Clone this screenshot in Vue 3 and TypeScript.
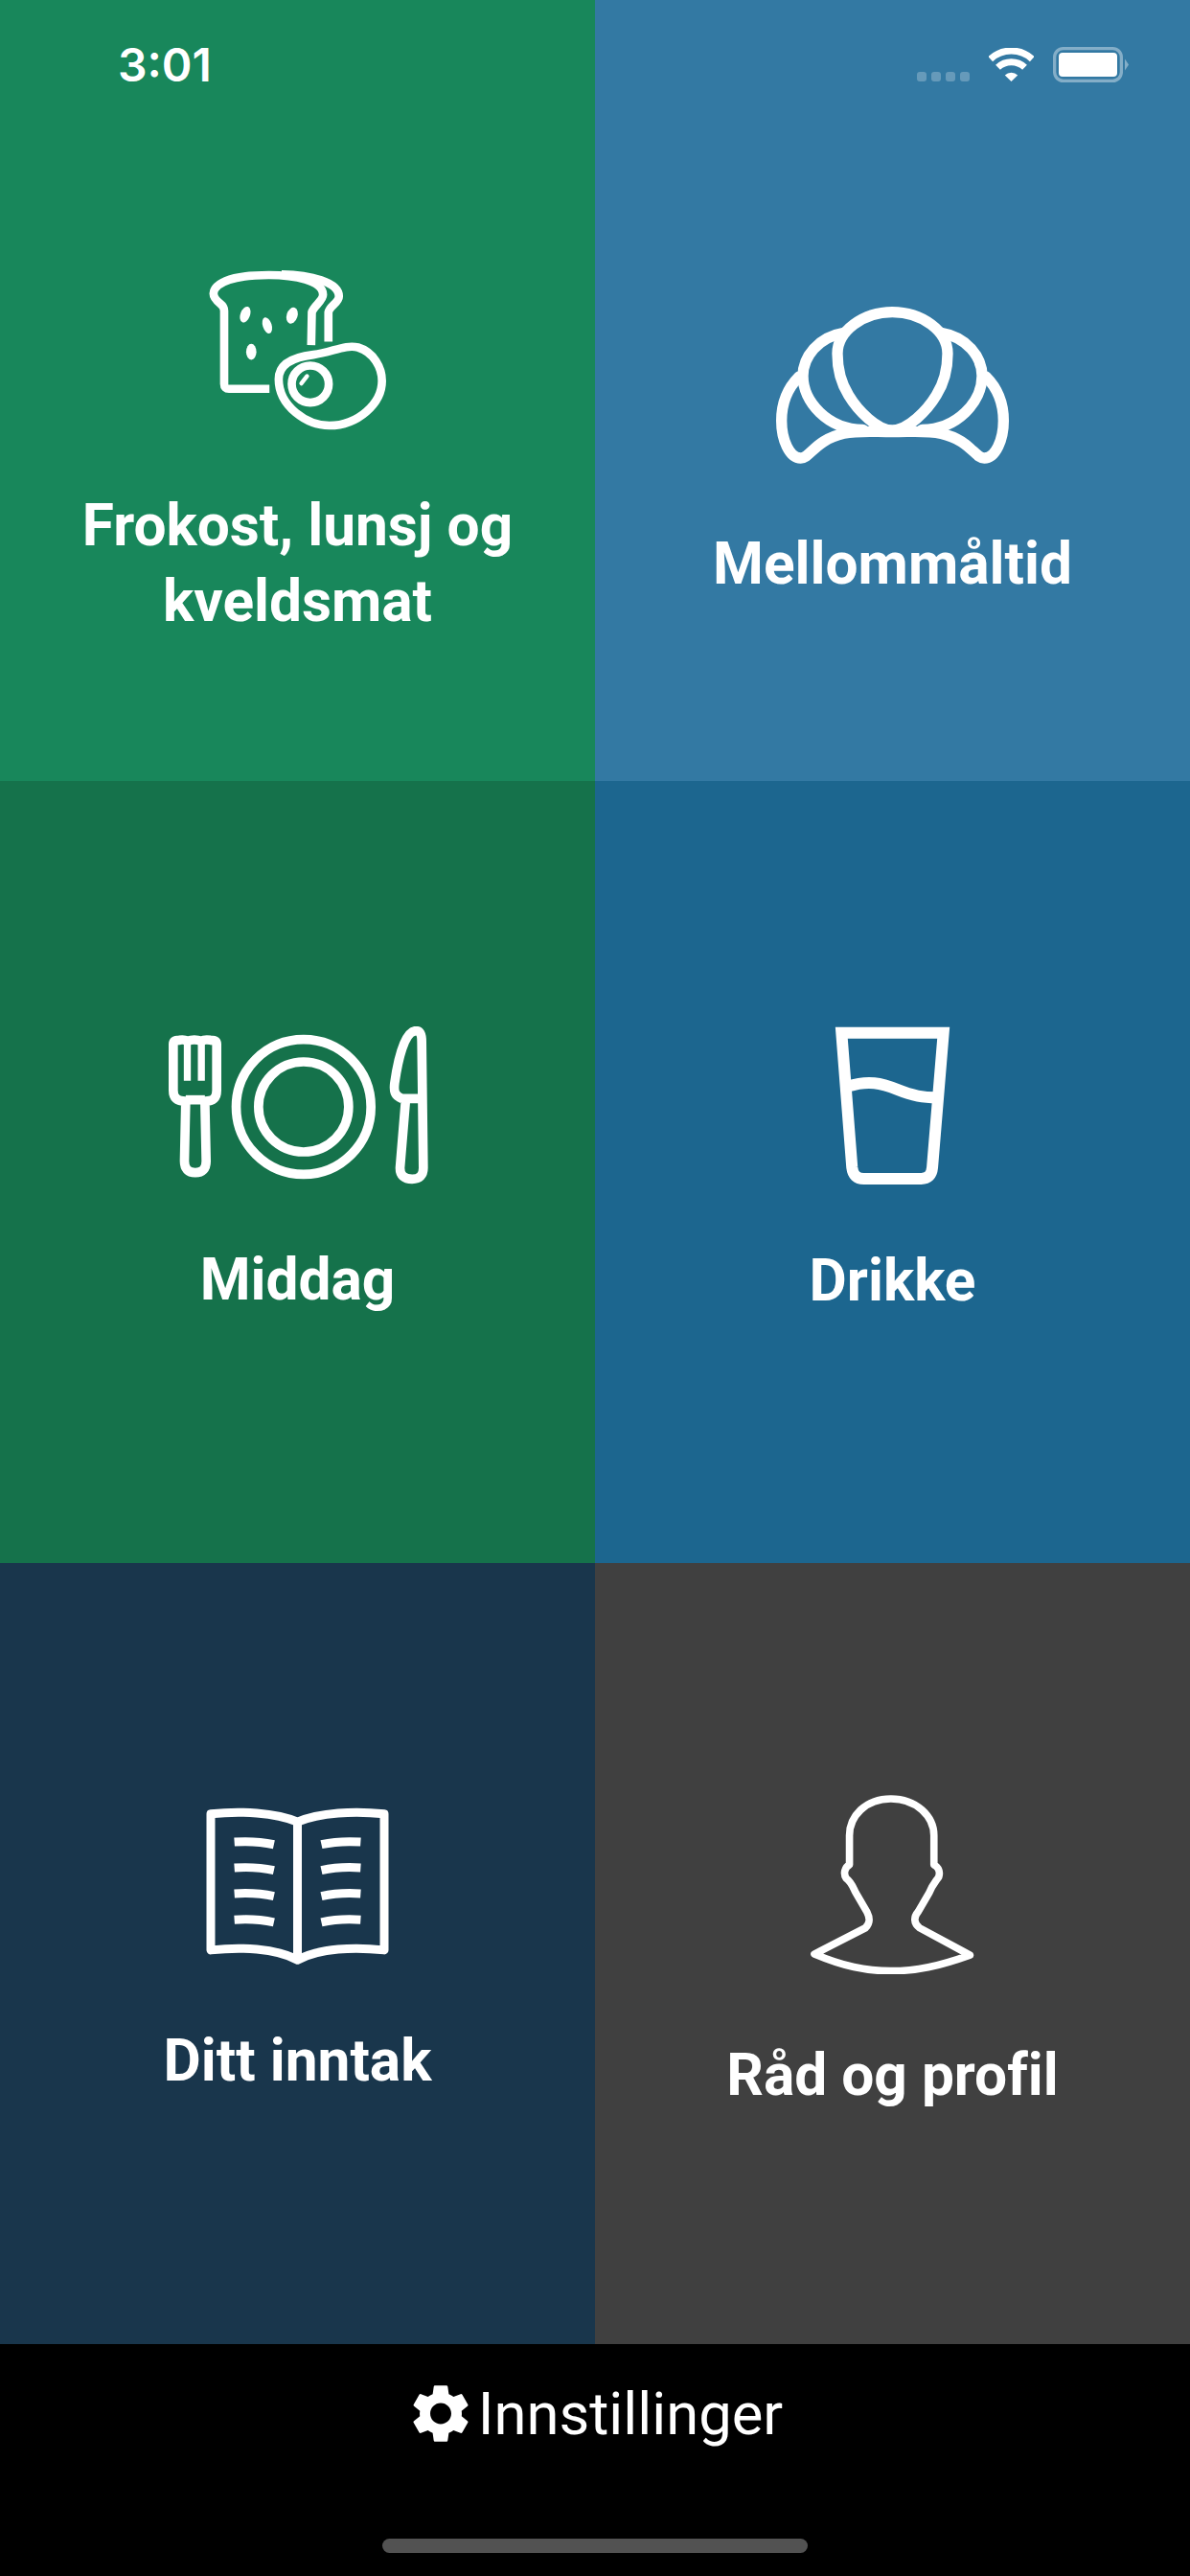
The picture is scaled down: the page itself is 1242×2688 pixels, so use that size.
<script setup lang="ts">
interface Tile {
  label: string
  color: string
  icon: string
}

const tiles: Tile[] = [
  { label: 'Frokost, lunsj og kveldsmat', color: '#18875b', icon: 'bread' },
  { label: 'Mellommåltid', color: '#3379a3', icon: 'croissant' },
  { label: 'Middag', color: '#15724b', icon: 'plate' },
  { label: 'Drikke', color: '#1c668f', icon: 'glass' },
  { label: 'Ditt inntak', color: '#19364c', icon: 'book' },
  { label: 'Råd og profil', color: '#404040', icon: 'person' },
]
</script>

<template>
  <main class="screen">
    <div class="status">
      <span class="status__time">3:01</span>
      <div class="status__right">
        <span class="status__dots"><i></i><i></i><i></i><i></i></span>
        <svg class="status__wifi" viewBox="0 0 47 35" width="47" height="35" fill="none" stroke="#fff" stroke-width="7">
          <path d="M1.7 11.6 A32 32 0 0 1 45.3 11.6" />
          <path d="M9.5 20.3 A20.5 20.5 0 0 1 37.5 20.3" />
          <path d="M23.5 35 L16.8 28.4 A9.5 9.5 0 0 1 30.2 28.4 Z" fill="#fff" stroke="none" />
        </svg>
        <svg class="status__battery" viewBox="0 0 79 37" width="79" height="37">
          <rect x="1.65" y="1.65" width="69.7" height="33.7" rx="9" fill="none" stroke="#fff" stroke-opacity="0.4" stroke-width="3.3" />
          <rect x="6" y="6" width="61" height="25" rx="4" fill="#fff" />
          <path d="M75 12.5 L79 18.5 L75 24.5 Z" fill="#fff" fill-opacity="0.4" />
        </svg>
      </div>
    </div>

    <div class="grid">
      <button
        v-for="tile in tiles"
        :key="tile.label"
        :class="['tile', `tile--${tile.icon}`]"
        :style="{ backgroundColor: tile.color }"
        type="button"
      >
        <svg v-if="tile.icon === 'bread'" class="icon" viewBox="110 90 560 505" width="187" height="168" fill="none" stroke="#fff" stroke-width="26">
          <path d="M302 465 L175 465 Q160 465 160 450 L160 220 Q160 207 148 198 C125 180 122 165 132 150 C155 118 230 108 300 108 C380 108 470 125 470 170 C470 190 440 205 435 225 L433 328" />
          <path d="M340 106 C430 108 520 130 520 175 C520 195 490 205 487 225 L487 317" />
          <g fill="#fff" stroke="none">
            <ellipse cx="226" cy="232" rx="15" ry="26" transform="rotate(20 226 232)" />
            <ellipse cx="295" cy="266" rx="14" ry="26" transform="rotate(-18 295 266)" />
            <ellipse cx="373" cy="235" rx="17" ry="26" transform="rotate(18 373 235)" />
            <ellipse cx="245" cy="349" rx="16" ry="25" />
          </g>
          <path d="M331 435 C331 385 380 365 440 358 C500 350 540 325 580 335 C630 350 655 400 655 440 C655 510 580 580 490 580 C420 580 331 520 331 435 Z" />
          <circle cx="430" cy="450" r="58" />
          <path d="M402 448 L420 425" stroke-width="13" stroke-linecap="round" />
        </svg>

        <svg v-else-if="tile.icon === 'croissant'" class="icon" viewBox="85 90 735 495" width="245" height="165" fill="none" stroke="#fff" stroke-width="34" stroke-linecap="round">
          <path d="M452 480 C405 480 345 420 315 370 C290 330 280 280 280 240 C280 170 360 110 452 110 C545 110 625 170 625 240 C625 280 615 330 590 370 C560 420 500 480 452 480 Z" />
          <path d="M300 175 C220 188 172 250 172 310 C172 390 250 478 360 478" />
          <path d="M605 175 C685 188 733 250 733 310 C733 390 655 478 545 478" />
          <path d="M160 312 C122 350 105 400 105 450 C105 510 130 567 165 567 C195 567 210 510 300 490 C350 480 390 485 452 485 C515 485 555 480 605 490 C695 510 710 567 740 567 C775 567 800 510 800 450 C800 400 783 350 745 312" />
        </svg>

        <svg v-else-if="tile.icon === 'plate'" class="icon" viewBox="45 62 815 495" width="272" height="165" fill="none" stroke="#fff" stroke-width="29">
          <path d="M101 296 L97 484 Q97 520 131 520 Q165 520 165 484 L161 296 C188 296 198 285 198 262 L198 118 Q198 105 178 105 Q160 102 150 108 Q128 100 106 108 Q95 102 82 105 Q62 105 62 118 L62 262 C62 285 74 296 101 296 Z" />
          <path d="M101 292 L161 292" />
          <path d="M106 105 L106 232 M150 105 L150 232" stroke-width="22" />
          <circle cx="470" cy="314" r="211" />
          <circle cx="470" cy="314" r="141" />
          <path d="M778 288 C755 280 752 265 755 240 C765 170 785 76 822 76 C838 76 840 95 840 110 L845 505 Q845 540 810 540 Q772 540 772 505 L790 288 L845 288" />
        </svg>

        <svg v-else-if="tile.icon === 'glass'" class="icon" viewBox="90 55 370 500" width="123" height="167" fill="none" stroke="#fff" stroke-width="36">
          <path d="M115 77 L435 77 L400 500 Q397 535 365 535 L185 535 Q152 535 148 500 Z" />
          <path d="M135 245 C200 225 240 235 290 255 C340 275 370 280 415 280" />
        </svg>

        <svg v-else-if="tile.icon === 'book'" class="icon" viewBox="40 50 580 495" width="193" height="165" fill="none" stroke="#fff" stroke-width="27" stroke-linejoin="round">
          <path d="M58 70 C150 60 260 65 330 95 C400 65 510 60 602 70 L602 497 C510 487 400 490 330 528 C260 490 150 487 58 497 Z" />
          <path d="M330 95 L330 528" />
          <path d="M132 158 C175 155 215 157 256 166 M132 239 C175 236 215 238 256 247 M132 320 C175 317 215 319 256 328 M132 402 C175 399 215 401 256 410" />
          <path d="M528 158 C485 155 445 157 405 166 M528 239 C485 236 445 238 405 247 M528 320 C485 317 445 319 405 328 M528 402 C485 399 445 401 405 410" />
        </svg>

        <svg v-else class="icon" viewBox="40 40 530 565" width="177" height="188" fill="none" stroke="#fff" stroke-width="23" stroke-linejoin="round">
          <path d="M300 55 C220 55 170 110 170 170 L170 262 C155 270 150 290 160 305 C175 315 180 330 190 350 L225 410 C235 430 235 445 220 460 L60 542 C150 580 220 595 300 595 C380 595 450 580 548 545 L390 460 C370 445 372 425 385 410 L420 350 C430 325 440 315 450 300 C455 285 450 270 435 262 L435 170 C435 110 380 55 300 55 Z" />
        </svg>

        <span class="tile__label">{{ tile.label }}</span>
      </button>
    </div>

    <footer class="footer">
      <button class="settings" type="button">
        <svg class="settings__icon" viewBox="2.5 2 19 20" width="58" height="61">
          <path fill="#fff" d="M19.14 12.94c.04-.3.06-.61.06-.94 0-.32-.02-.64-.07-.94l2.03-1.58a.49.49 0 0 0 .12-.61l-1.92-3.32a.488.488 0 0 0-.59-.22l-2.39.96c-.5-.38-1.03-.7-1.62-.94l-.36-2.54a.484.484 0 0 0-.48-.41h-3.84c-.24 0-.43.17-.47.41l-.36 2.54c-.59.24-1.13.57-1.62.94l-2.39-.96c-.22-.08-.47 0-.59.22L2.74 8.87c-.12.21-.08.47.12.61l2.03 1.58c-.05.3-.09.63-.09.94s.02.64.07.94l-2.03 1.58a.49.49 0 0 0-.12.61l1.92 3.32c.12.22.37.29.59.22l2.39-.96c.5.38 1.03.7 1.62.94l.36 2.54c.05.24.24.41.48.41h3.84c.24 0 .44-.17.47-.41l.36-2.54c.59-.24 1.13-.56 1.62-.94l2.39.96c.22.08.47 0 .59-.22l1.92-3.32c.12-.22.07-.47-.12-.61l-2.01-1.58zM12 15.6c-1.98 0-3.6-1.62-3.6-3.6s1.62-3.6 3.6-3.6 3.6 1.62 3.6 3.6-1.62 3.6-3.6 3.6z" />
        </svg>
        <span>Innstillinger</span>
      </button>
      <div class="home-bar"></div>
    </footer>
  </main>
</template>

<style scoped>
.screen {
  position: relative;
  display: flex;
  flex-direction: column;
  width: 1242px;
  height: 2688px;
  background: #000;
  overflow: hidden;
  font-family: Roboto, "Liberation Sans", sans-serif;
  color: #fff;
}

.status {
  position: absolute;
  top: 49px;
  left: 0;
  right: 0;
  display: flex;
  justify-content: space-between;
  align-items: center;
  height: 37px;
  padding: 0 64px 0 123px;
}

.status__time {
  font-family: Inter, "Liberation Sans", sans-serif;
  font-size: 48px;
  font-weight: 600;
  line-height: 37px;
}

.status__right {
  display: flex;
  align-items: center;
  gap: 20px;
}

.status__dots {
  display: flex;
  gap: 5px;
  margin-top: 25px;
}

.status__dots i {
  width: 10px;
  height: 10px;
  border-radius: 3px;
  background: rgba(255, 255, 255, 0.25);
}

.grid {
  display: grid;
  grid-template-columns: 1fr 1fr;
  grid-auto-rows: 815.33px;
}

.tile {
  display: flex;
  flex-direction: column;
  align-items: center;
  justify-content: center;
  gap: 60px;
  padding: 0 60px;
  border: none;
  color: inherit;
  font: inherit;
}

.tile--bread,
.tile--croissant {
  padding-top: 132px;
}

.tile--croissant {
  gap: 65px;
}

.tile--person {
  gap: 66px;
}

.tile__label {
  font-size: 60.4px;
  font-weight: 700;
  line-height: 79px;
  text-align: center;
  font-variant-ligatures: none;
}

.icon {
  flex: none;
}

.footer {
  flex: 1;
  display: flex;
  flex-direction: column;
  align-items: center;
}

.settings {
  display: flex;
  align-items: center;
  gap: 10px;
  height: 80px;
  margin-top: 33px;
  margin-left: 6px;
  padding: 0;
  background: none;
  border: none;
  color: inherit;
  font: inherit;
  font-size: 61.5px;
}

.home-bar {
  width: 444px;
  height: 15px;
  margin-top: 90px;
  border-radius: 8px;
  background: #525252;
}
</style>
